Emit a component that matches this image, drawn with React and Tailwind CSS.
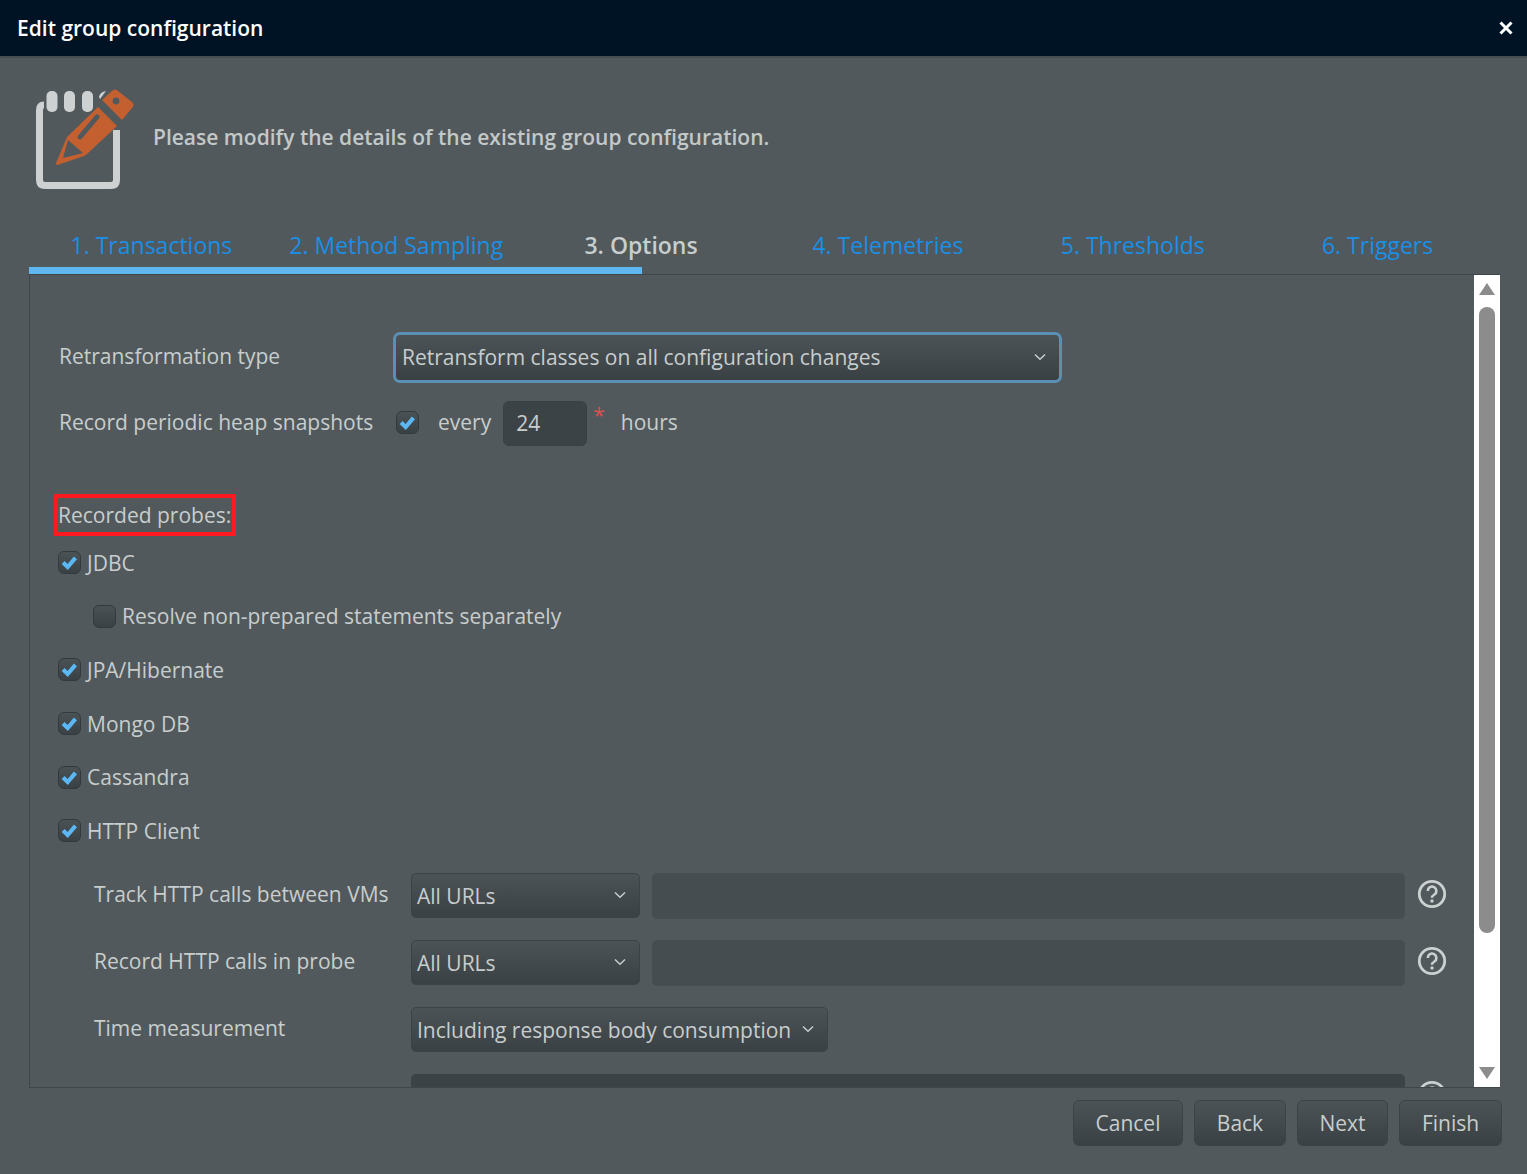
const CHECK = "M4.5 11.5 L9.5 16.5 L18 6.5";

function Box({ checked }) {
  return (
    <span className="flex h-[23px] w-[23px] shrink-0 items-center justify-center rounded-[6px] border border-[#333a3d] bg-gradient-to-b from-[#4a5255] to-[#3a4144]">
      {checked && (
        <svg width="21" height="21" viewBox="0 0 23 23" fill="none">
          <path d={CHECK} stroke="#5cb8f5" strokeWidth="4.5" strokeLinejoin="miter" />
        </svg>
      )}
    </span>
  );
}

function Chevron() {
  return (
    <svg className="shrink-0" width="12" height="8" viewBox="0 0 12 8" fill="none">
      <path d="M1 1.5 L6 6.2 L11 1.5" stroke="#c8cdcd" strokeWidth="1.5" />
    </svg>
  );
}

function Select({ className, text }) {
  return (
    <div className={`flex h-[45px] shrink-0 items-center justify-between rounded-[5px] border border-[#3c4346] bg-gradient-to-b from-[#4b5356] to-[#3a4144] pl-[5px] pr-[13px] text-[#c8cdcd] ${className}`}>
      <span className="whitespace-nowrap pt-[2px]">{text}</span>
      <Chevron />
    </div>
  );
}

function Help() {
  return (
    <svg className="shrink-0" width="30" height="30" viewBox="0 0 30 30" fill="none">
      <circle cx="15" cy="15" r="12.7" stroke="#cbd0d0" strokeWidth="2.8" />
      <path d="M10.8 12 A4.3 4.3 0 1 1 17.4 15.5 C15.6 16.6 15 17.2 15 18.8" stroke="#cbd0d0" strokeWidth="2.6" />
      <circle cx="15" cy="22" r="1.7" fill="#cbd0d0" />
    </svg>
  );
}

function Probe({ label, indent }) {
  return (
    <div className={`flex h-[53.6px] items-center ${indent ? "pl-[35px]" : ""}`}>
      <Box checked={!indent} />
      <span className="ml-[6px]">{label}</span>
    </div>
  );
}

function UrlRow({ label }) {
  return (
    <div className="flex h-[67px] shrink-0 items-start">
      <span className="w-[317px] shrink-0 pt-[6px]">{label}</span>
      <Select className="w-[229px]" text="All URLs" />
      <div className="ml-3 h-[46px] w-[753px] shrink-0 rounded-[5px] border border-[#464e51] bg-[#454d50]" />
      <span className="ml-3 mt-[6px]"><Help /></span>
    </div>
  );
}

const tabs = ["1. Transactions", "2. Method Sampling", "3. Options", "4. Telemetries", "5. Thresholds", "6. Triggers"];

export default function App() {
  return (
    <div className="flex h-[1174px] flex-col overflow-hidden bg-[#51595c] text-[21px] leading-[30px] text-[#c8cdcd] [font-family:'Open_Sans',sans-serif]">
      <header className="flex h-[58px] shrink-0 items-center justify-between border-b-2 border-[#464d50] bg-[#001324] pl-[17px] pr-[13px] text-white">
        <span className="text-[21px] font-semibold">Edit group configuration</span>
        <svg width="16" height="16" viewBox="0 0 16 16" fill="none">
          <path d="M2.5 2.5 L13.5 13.5 M13.5 2.5 L2.5 13.5" stroke="#fff" strokeWidth="3" />
        </svg>
      </header>

      <div className="flex h-[167px] shrink-0 items-start pl-[33px] pt-[30px]">
        <svg className="shrink-0" width="104" height="104" viewBox="0 0 104 104" fill="none">
          <path d="M11 17 Q6.5 17 6.5 22 V92 Q6.5 97.5 12 97.5 H78 Q83.5 97.5 83.5 92 V42" stroke="#cdd1d1" strokeWidth="7" fill="none" />
          <rect x="13.5" y="3" width="11" height="21" rx="5" fill="#cdd1d1" />
          <rect x="31" y="3" width="11" height="21" rx="5" fill="#cdd1d1" />
          <rect x="49" y="3" width="11" height="21" rx="5" fill="#cdd1d1" />
          <path d="M66 9 Q67 4 73 3 L67 11 Z" fill="#cdd1d1" />
          <path d="M69 12 L79 3 Q82 0 85 3 L99 14 Q102 17 99 20 L89 32 Z" fill="#c45f30" />
          <circle cx="83" cy="13" r="3.4" fill="#51595c" />
          <path d="M65 19 L84 38 L54 66 Q53 67 51 68 L26 76.5 Q22 78 23.5 74 L34 49 Z" fill="#c45f30" />
          <path d="M64 29 L47 49" stroke="#51595c" strokeWidth="5" strokeLinecap="round" />
          <path d="M35 52 L30 70 L50 65 Z" fill="#51595c" />
        </svg>
        <p className="ml-[16px] mt-[34px] whitespace-nowrap text-[21px] font-semibold text-[#c3c8c8]">Please modify the details of the existing group configuration.</p>
      </div>

      <nav className="mx-[29px] shrink-0">
        <div className="grid h-[42px] grid-cols-6 text-center text-[23px] leading-[40px] text-[#1a8fe6]">
          {tabs.map((t, i) => (
            <span key={t} className={`whitespace-nowrap ${i === 2 ? "font-semibold text-[#c8cdcd]" : ""} ${i > 2 ? "pl-[4px]" : ""}`}>{t}</span>
          ))}
        </div>
        <div className="h-[7px] w-[613px] bg-[#60b6ee]" />
      </nav>

      <div className="ml-[29px] mr-[27px] flex h-[814px] shrink-0 overflow-hidden border-y border-l border-[#3f4649]">
        <div className="min-w-0 flex-1 overflow-hidden pl-[29px] pt-[57px]">
          <div className="flex h-[51px] items-start">
            <span className="w-[334px] shrink-0 pt-[9px]">Retransformation type</span>
            <div className="flex h-[51px] w-[669px] items-center justify-between rounded-[7px] border-[3px] border-[#5b8fb3] bg-gradient-to-b from-[#4b5356] to-[#3a4144] pb-[1px] pl-[6px] pr-[13px]">
              <span className="whitespace-nowrap">Retransform classes on all configuration changes</span>
              <Chevron />
            </div>
          </div>
          <div className="mt-[18px] flex h-[47px] items-start">
            <span className="w-[337px] shrink-0 pt-[6px]">Record periodic heap snapshots</span>
            <span className="mt-[10px]"><Box checked /></span>
            <span className="ml-[19px] pt-[6px]">every</span>
            <div className="ml-[12px] flex h-[45px] w-[84px] items-center rounded-[6px] border border-[#3a4144] bg-[#3c4346] pb-[1px] pl-[12px]">24</div>
            <span className="ml-[6px] -mt-[1px] text-[#d9534f]">*</span>
            <span className="ml-[16px] pt-[6px]">hours</span>
          </div>
          <div className="-ml-[5px] mt-[46px] flex h-[42px] w-[182px] items-center whitespace-nowrap border-4 border-[#ff1a22] pb-[1px]">Recorded probes:</div>
          <div className="-ml-[1px]">
            <Probe label="JDBC" />
            <Probe label="Resolve non-prepared statements separately" indent />
            <Probe label="JPA/Hibernate" />
            <Probe label="Mongo DB" />
            <Probe label="Cassandra" />
            <Probe label="HTTP Client" />
          </div>
          <div className="ml-[35px] mt-[15.4px]">
            <UrlRow label="Track HTTP calls between VMs" />
            <UrlRow label="Record HTTP calls in probe" />
            <div className="flex h-[67px] items-start">
              <span className="w-[317px] shrink-0 pt-[6px]">Time measurement</span>
              <Select className="w-[417px]" text="Including response body consumption" />
            </div>
            <div className="flex items-start">
              <span className="w-[317px] shrink-0 pt-[5px]"></span>
              <div className="h-[46px] w-[994px] shrink-0 rounded-[5px] bg-[#3c4346]" />
              <span className="ml-3 mt-[6px]"><Help /></span>
            </div>
          </div>
        </div>
        <div className="flex w-[26px] shrink-0 flex-col items-center bg-white pt-[8px]">
          <div className="h-0 w-0 border-x-[8px] border-b-[12px] border-x-transparent border-b-[#8c8c8c]" />
          <div className="mt-[12px] h-[626px] w-[16px] rounded-full bg-[#8c8c8c]" />
          <div className="mt-[134px] h-0 w-0 border-x-[8px] border-t-[12px] border-x-transparent border-t-[#8c8c8c]" />
        </div>
      </div>

      <footer className="flex justify-end gap-[11px] pr-[25px] pt-[12px]">
        {[["Cancel", 110], ["Back", 92], ["Next", 91], ["Finish", 103]].map(([t, w]) => (
          <button key={t} style={{ width: w }} className="h-[46px] rounded-[6px] border border-[#3c4346] bg-gradient-to-b from-[#4b5356] to-[#3a4144] text-[#c8cdcd]">{t}</button>
        ))}
      </footer>
    </div>
  );
}
